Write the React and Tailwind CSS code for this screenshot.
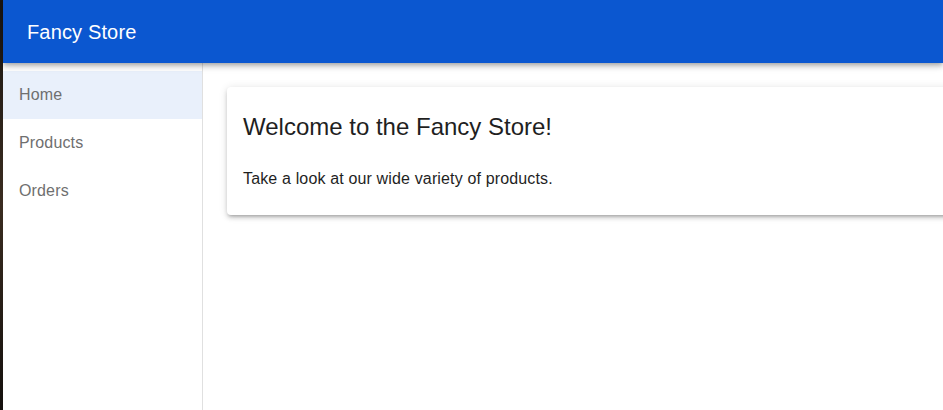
import React from 'react';

const navItems = ['Home', 'Products', 'Orders'];

const App = () => {
  const active = 'Home';

  return (
    <div className="flex h-[410px] w-[943px] overflow-hidden bg-white font-['Liberation_Sans',Arial,sans-serif]">
      {/* desktop strip peeking at the left edge */}
      <div className="w-[3px] shrink-0 bg-gradient-to-b from-[#1b1612] via-[#3a2c20] to-[#14100d]"></div>

      <div className="flex min-w-0 flex-1 flex-col">
        <header className="relative z-10 flex h-[63px] shrink-0 items-center bg-[#0b57d0] px-6 shadow-[0_2px_4px_-1px_rgba(0,0,0,0.2),0_4px_5px_0_rgba(0,0,0,0.14),0_1px_10px_0_rgba(0,0,0,0.12)]">
          <h1 className="text-[20px] leading-8 tracking-[0.15px] text-white">Fancy Store</h1>
        </header>

        <div className="flex min-h-0 flex-1">
          <nav className="w-[200px] shrink-0 border-r border-[#e0e0e0] pt-2">
            {navItems.map((item) => (
              <div
                key={item}
                className={`flex h-12 items-center px-4 text-[16px] tracking-[0.15px] text-[#6f6f6f] ${item === active ? 'bg-[#e9f0fb]' : ''}`}
              >
                {item}
              </div>
            ))}
          </nav>

          <main className="min-w-0 flex-1 p-6">
            <div className="w-[760px] rounded bg-white px-4 pb-6 pt-6 shadow-[0_3px_3px_-2px_rgba(0,0,0,0.2),0_3px_4px_0_rgba(0,0,0,0.14),0_1px_8px_0_rgba(0,0,0,0.12)]">
              <h2 className="text-[24px] leading-8 text-[#1f1f1f]">Welcome to the Fancy Store!</h2>
              <p className="mt-6 text-[16px] leading-6 tracking-[0.15px] text-[#1f1f1f]">Take a look at our wide variety of products.</p>
            </div>
          </main>
        </div>
      </div>
    </div>
  );
};

export default App;
